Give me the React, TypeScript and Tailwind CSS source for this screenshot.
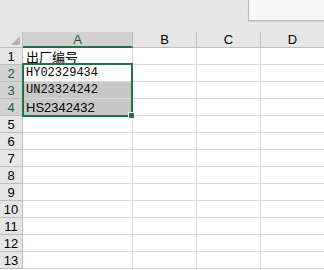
import React from "react";

const cols = [
  { key: "A", w: "w-[110px]" },
  { key: "B", w: "w-[64px]" },
  { key: "C", w: "w-[64px]" },
  { key: "D", w: "w-[64px]" },
];

const mono = "text-[12px] font-['Liberation_Mono',monospace]";

const data: Record<number, { text: string; cls: string }> = {
  1: { text: "出厂编号", cls: "text-[13px] font-['Noto_Sans_CJK_SC',sans-serif]" },
  2: { text: "HY02329434", cls: mono },
  3: { text: "UN23324242", cls: mono },
  4: { text: "HS2342432", cls: "text-[13px] font-['Liberation_Sans',sans-serif]" },
};

const rows = Array.from({ length: 13 }, (_, i) => i + 1);

export default function App() {
  return (
    <div className="w-[324px] h-[270px] overflow-hidden bg-white font-['Liberation_Sans',Arial,sans-serif] text-black">
      {/* ribbon area */}
      <div className="h-[32px] bg-[#e6e6e6] flex justify-end">
        <div className="w-[76px] h-[21px] bg-[#f7f7f7] border-l border-b border-[#b9b9b9] shadow-[0_1px_1px_rgba(0,0,0,0.08)]" />
      </div>

      <div className="relative">
        {/* column header */}
        <div className="flex h-[16px] bg-[#e6e6e6]">
          <div className="w-[23px] shrink-0 border-r border-b border-[#bdbdbd] relative">
            <div className="absolute right-[2px] bottom-[2px] w-0 h-0 border-l-[9px] border-l-transparent border-b-[9px] border-b-[#b4b4b4]" />
          </div>
          {cols.map((c) =>
            c.key === "A" ? (
              <div
                key={c.key}
                className={`${c.w} shrink-0 bg-[#d2d2d2] border-r border-[#bdbdbd] border-b-2 border-b-[#217346] flex items-center justify-center text-[13px] leading-none text-[#1e5a3a]`}
              >
                {c.key}
              </div>
            ) : (
              <div
                key={c.key}
                className={`${c.w} shrink-0 border-r border-b border-[#bdbdbd] flex items-center justify-center text-[13px] leading-none`}
              >
                {c.key}
              </div>
            )
          )}
        </div>

        {rows.map((r) => {
          const sel = r >= 2 && r <= 4;
          const cell = data[r];
          return (
            <div key={r} className="flex h-[17px]">
              <div
                className={`w-[23px] shrink-0 border-r border-b border-[#bdbdbd] flex items-center justify-center text-[13px] leading-none ${
                  sel ? "bg-[#d2d2d2] text-[#1e5a3a]" : "bg-[#e6e6e6]"
                }`}
              >
                {r}
              </div>
              <div
                className={`w-[110px] shrink-0 border-r border-b border-[#d9d9d9] flex items-center pl-[3px] leading-none whitespace-nowrap ${
                  r === 3 || r === 4 ? "bg-[#c8c8c8]" : ""
                }`}
              >
                {cell && <span className={cell.cls}>{cell.text}</span>}
              </div>
              <div className="w-[64px] shrink-0 border-r border-b border-[#d9d9d9]" />
              <div className="w-[64px] shrink-0 border-r border-b border-[#d9d9d9]" />
              <div className="w-[64px] shrink-0 border-r border-b border-[#d9d9d9]" />
            </div>
          );
        })}

        {/* selection A2:A4 */}
        <div className="absolute left-[22px] top-[31px] w-[111px] h-[54px] border-2 border-[#217346] pointer-events-none" />
        <div className="absolute left-[128px] top-[80px] w-[7px] h-[7px] bg-[#217346] border border-white" />
      </div>
    </div>
  );
}
